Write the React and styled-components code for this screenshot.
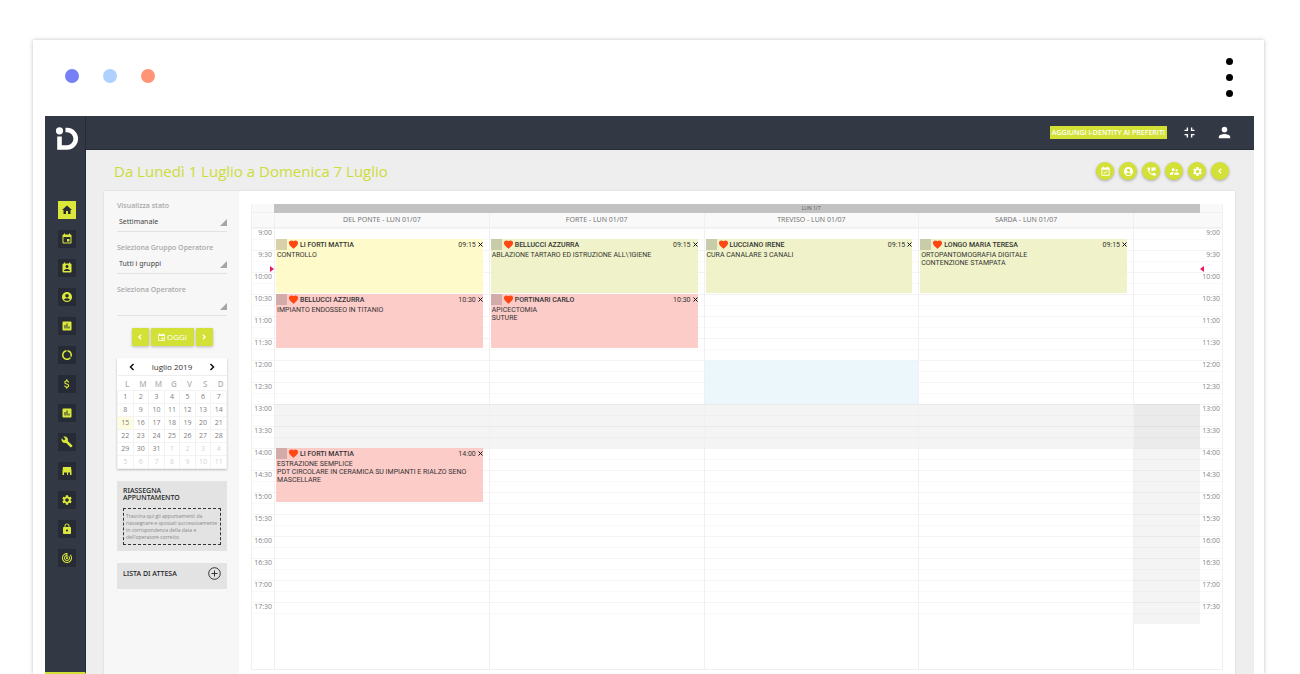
import styled, { createGlobalStyle } from 'styled-components'
import {
    MdAccountCircle, MdAttachMoney, MdBuild, MdDataUsage, MdEvent, MdEventAvailable, MdFavorite,
    MdFullscreenExit, MdHome, MdLock, MdPermContactCalendar, MdPermPhoneMsg, MdPerson, MdPoll,
    MdSettings, MdSupervisorAccount, MdTrackChanges
} from 'react-icons/md'

const Colours = {
    lime: '#d3e036',
    dark: '#323844',
    darker: '#262b35',
    page: '#eeeeee',
    line: '#f0f0f0',
    yellow: '#fff9c1d9',
    green: '#edf1bfd9',
    red: '#fbc3bfd9'
}

const GlobalStyle = createGlobalStyle`
    * {
        box-sizing: border-box;
    }

    body {
        margin: 0;
        background: white;
        font-family: 'Open Sans', 'Liberation Sans', sans-serif;
        color: #333;
    }

    button, select {
        font-family: inherit;
        border: 0;
        padding: 0;
        margin: 0;
        color: inherit;
        cursor: pointer;
    }
`

const Page = styled.div`
    display: flex;
    flex-direction: column;
    min-height: 100vh;
    padding: 40px 36px 0 33px;
`

const Browser = styled.div`
    flex: 1;
    display: flex;
    flex-direction: column;
    padding: 0 10px 0 12px;
    background: white;
    box-shadow: 0 0 4px rgba(0, 0, 0, 0.25);
    clip-path: inset(-6px -6px 0 -6px);
`

const Chrome = styled.div`
    display: flex;
    justify-content: space-between;
    align-items: flex-start;
    height: 76px;
    padding: 18px 21px 0 20px;
`

const Dots = styled.div`
    display: flex;
    gap: 24px;
    padding-top: 11px;
`

const Dot = styled.span`
    width: 14px;
    height: 14px;
    border-radius: 50%;
    background: ${props => props.$colour};
`

const Kebab = styled.button`
    display: flex;
    flex-direction: column;
    gap: 9px;
    background: none;

    & span {
        width: 7px;
        height: 7px;
        border-radius: 50%;
        background: black;
    }
`

const Application = styled.div`
    flex: 1;
    display: grid;
    grid-template-columns: 41px 1fr;
    grid-template-rows: 34px 1fr;
    background: ${Colours.page};
`

const Sidebar = styled.nav`
    grid-row: 1 / 3;
    display: flex;
    flex-direction: column;
    align-items: center;
    padding: 11px 0 0 3px;
    background: ${Colours.dark};
    border-right: 1px solid ${Colours.darker};
    border-bottom: 2px solid ${Colours.lime};
`

const Logo = styled.svg`
    width: 24px;
    height: 24px;
`

const Menu = styled.ul`
    list-style-type: none;
    display: flex;
    flex-direction: column;
    gap: 11px;
    margin: 50px 0 0;
    padding: 0;
`

const MenuLink = styled.a`
    display: flex;
    align-items: center;
    justify-content: center;
    width: 18px;
    height: 18px;
    font-size: 12px;
    color: ${props => props.$active ? Colours.darker : '#dbea3a'};
    background: ${props => props.$active ? '#d9e83a' : Colours.darker};
`

const TopBar = styled.header`
    display: flex;
    align-items: center;
    justify-content: flex-end;
    padding-right: 21px;
    background: ${Colours.dark};
    border-bottom: 1px solid ${Colours.darker};
`

const Favourite = styled.button`
    height: 13px;
    padding: 0 2px;
    margin-right: 14px;
    font-size: 7px;
    font-weight: 600;
    line-height: 13px;
    color: white;
    background: ${Colours.lime};
`

const BarButton = styled.button`
    display: flex;
    margin-left: ${props => props.$gap || 0}px;
    font-size: 17px;
    color: white;
    background: none;
`

const Main = styled.main`
    display: flex;
    flex-direction: column;
    padding: 11px 19px 0 18px;
`

const Heading = styled.div`
    display: flex;
    align-items: center;
    justify-content: space-between;
    height: 20px;
    margin-bottom: 10px;
    padding: 0 6px 0 10px;

    & h1 {
        margin: 0;
        font-size: 15px;
        line-height: 20px;
        font-weight: 500;
        color: #cddc39;
    }
`

const Actions = styled.div`
    display: flex;
    gap: 5px;
`

const RoundButton = styled.button`
    display: flex;
    align-items: center;
    justify-content: center;
    width: 18px;
    height: 18px;
    border-radius: 50%;
    font-size: 11px;
    color: white;
    background: ${Colours.lime};
    box-shadow: 0 1px 3px rgba(0, 0, 0, 0.3);
`

const Panel = styled.div`
    flex: 1;
    display: flex;
    background: white;
    box-shadow: 0 0 2px rgba(0, 0, 0, 0.12);
`

const Filters = styled.aside`
    width: 135px;
    flex-shrink: 0;
    padding: 9px 12px 0 13px;
    background: #f7f7f7;
`

const Field = styled.div`
    height: 32px;
    margin-bottom: 10px;
    border-bottom: 1px solid #e2e2e2;

    & label {
        display: block;
        font-size: 7px;
        font-weight: 600;
        line-height: 12px;
        color: #a9a9a9;
    }
`

const SelectBox = styled.div`
    display: flex;
    align-items: flex-end;

    & select {
        flex: 1;
        height: 18px;
        padding: 0 3px 0 2px;
        appearance: none;
        font-family: 'Noto Sans', sans-serif;
        font-size: 7px;
        color: #444;
        background: transparent;
    }

    &::after {
        content: '';
        border-left: 7px solid transparent;
        border-bottom: 7px solid #a5a5a5;
        margin-bottom: 4px;
    }
`

const Pager = styled.div`
    display: flex;
    justify-content: center;
    gap: 2px;
    margin: 12px 0;
`

const PagerButton = styled.button`
    display: flex;
    align-items: center;
    justify-content: center;
    gap: 1px;
    width: ${props => props.$wide ? 43 : 17}px;
    height: 18px;
    border-radius: 1px;
    font-size: 8px;
    line-height: 10px;
    font-weight: 500;
    color: white;
    background: ${Colours.lime};
    box-shadow: 0 1px 3px rgba(0, 0, 0, 0.25);
`

const Calendar = styled.div`
    margin-bottom: 12px;
    background: white;
    box-shadow: 0 1px 2px rgba(0, 0, 0, 0.25);
`

const CalendarHead = styled.div`
    display: flex;
    align-items: center;
    justify-content: space-between;
    height: 17px;
    padding: 0 11px;
    font-size: 8px;

    & button {
        display: flex;
        color: #111;
        background: none;
    }
`

const CalendarTable = styled.table`
    width: 100%;
    table-layout: fixed;
    border-collapse: collapse;
    text-align: center;

    & th {
        height: 14px;
        padding: 2px 0 0 4px;
        border-top: 1px solid #eee;
        font-size: 8px;
        font-weight: 600;
        line-height: 12px;
        color: #b5b5b5;
    }
`

const Day = styled.td`
    height: 13px;
    padding: 0;
    border: 1px solid #f3f3f3;
    font-size: 7px;
    line-height: 12px;
    color: ${props => props.$other ? '#d3d3d3' : '#808080'};
    background: ${props => props.$today ? '#fffde0' : 'white'};
`

const Card = styled.section`
    margin-bottom: 12px;
    padding: 6px;
    background: #e3e3e3;

    & h2 {
        margin: 0;
        font-family: 'Noto Sans', sans-serif;
        font-size: 7px;
        font-weight: 500;
        line-height: 7px;
        color: #222;
    }

    & p {
        margin: 7px 0 0;
        padding: 4px 2px 3px;
        border: 1px dashed #333;
        font-size: 5px;
        line-height: 7px;
        color: #888;
    }
`

const CardHead = styled.div`
    display: flex;
    justify-content: space-between;
    align-items: center;
    height: 14px;
    margin-top: -3px;
    margin-bottom: 3px;

    & button {
        display: flex;
        background: none;
    }
`

const Scheduler = styled.div`
    flex: 1;
    display: grid;
    grid-template-columns: 22px repeat(4, 1fr) 67px 22px;
    grid-template-rows: 9px 15px 1fr;
    margin: 13px 12px 4px;
    border: 1px solid ${Colours.line};
    border-top: 0;
`

const HeadCell = styled.div`
    background: #f9f9f9;
    border-left: 1px solid ${Colours.line};
    border-bottom: 1px solid ${Colours.line};
    font-family: 'Noto Sans', sans-serif;
    font-size: 7px;
    line-height: 14px;
    text-align: center;
    color: #777;
`

const WeekBar = styled.div`
    grid-column: 2 / 7;
    padding-left: 16%;
    font-size: 5px;
    line-height: 9px;
    text-align: center;
    color: #555;
    background: #c2c2c2;
`

const Corner = styled.div`
    background: #f9f9f9;
    border-bottom: 1px solid ${Colours.line};
`

const Hours = styled.ol`
    position: relative;
    list-style-type: none;
    margin: 0;
    padding: 0 0 45px;
    font-size: 7px;
    line-height: 10px;
    text-align: right;
    color: #858585;

    & li {
        height: 22px;
        padding-right: 2px;
        background: linear-gradient(#f3f3f3 1px, transparent 1px 11px, #f9f9f9 11px 12px, transparent 12px);
    }
`

const NowMark = styled.span`
    position: absolute;
    top: 38px;
    ${props => props.$side}: 0;
    border: 3px solid transparent;
    border-${props => props.$side === 'right' ? 'left' : 'right'}: 4px solid #ec1561;
    border-${props => props.$side}: 0;
`

/* one row for each quarter of an hour, from 9:00 to 18:00 */
const Column = styled.div`
    display: grid;
    grid-template-columns: 100%;
    grid-template-rows: repeat(36, 11px);
    border-left: 1px solid ${Colours.line};
    background: repeating-linear-gradient(#f3f3f3 0 1px, transparent 1px 11px, #f9f9f9 11px 12px, transparent 12px 22px) no-repeat;
    background-size: 100% 386px;
`

const Block = styled.div`
    grid-area: ${props => props.$from} / 1 / ${props => props.$to} / 2;
    background: ${props => props.$colour};
`

const Appointment = styled.article`
    grid-area: ${props => props.$from} / 1 / span 5 / 2;
    margin: 0 6px 1px 1px;
    background: ${props => props.$colour};
    font-family: Roboto, 'Liberation Sans', sans-serif;

    & header {
        display: flex;
        align-items: center;
        gap: 1px;
        height: 11px;
        font-size: 7px;
    }

    & h3 {
        flex: 1;
        margin: 0;
        font-size: 7px;
        font-weight: 500;
    }

    & button {
        display: flex;
        margin-left: 1px;
        color: #111;
        background: none;
    }

    & p {
        margin: 1px 0 0;
        padding-left: 1px;
        font-size: 7px;
        line-height: 8px;
        white-space: pre-line;
    }
`

const Tag = styled.span`
    width: 11px;
    height: 11px;
    background: rgba(0, 0, 0, 0.16);
`

function StoreIcon() {
    return (
        <svg width="12" height="12" viewBox="0 0 24 24" fill="currentColor">
            <path d="M4 4h16l1 8v8h-3v-5h-4v5h-2v-5H6v5H3v-8z" />
        </svg>
    )
}

function ChevronLeft({ size = 6 }) {
    return (
        <svg width={size} height={size} viewBox="0 0 8 8" fill="none" stroke="currentColor" strokeWidth="1.5">
            <path d="M5.5 1 2.5 4l3 3" />
        </svg>
    )
}

function ChevronRight({ size = 6 }) {
    return (
        <svg width={size} height={size} viewBox="0 0 8 8" fill="none" stroke="currentColor" strokeWidth="1.5">
            <path d="m2.5 1 3 3-3 3" />
        </svg>
    )
}

function Cross() {
    return (
        <svg width="5" height="5" viewBox="0 0 5 5" fill="none" stroke="currentColor">
            <path d="m.5.5 4 4m0-4-4 4" />
        </svg>
    )
}

const menu = [
    ['Home', MdHome], ['Agenda', MdEvent], ['Contatti', MdPermContactCalendar], ['Pazienti', MdAccountCircle],
    ['Statistiche', MdPoll], ['Utilizzo', MdDataUsage], ['Pagamenti', MdAttachMoney], ['Report', MdPoll],
    ['Strumenti', MdBuild], ['Magazzino', StoreIcon], ['Impostazioni', MdSettings], ['Sicurezza', MdLock],
    ['Monitoraggio', MdTrackChanges]
]

const actions = [
    ['Nuovo appuntamento', MdEventAvailable], ['Paziente', MdAccountCircle], ['Chiamate', MdPermPhoneMsg],
    ['Operatori', MdSupervisorAccount], ['Impostazioni', MdSettings], ['Indietro', ChevronLeft]
]

const hours = Array.from({ length: 18 }, (_, i) => `${9 + Math.floor(i / 2)}:${i % 2 ? '30' : '00'}`)

const weeks = Array.from({ length: 6 }, (_, w) => Array.from({ length: 7 }, (_, d) => w * 7 + d + 1))

const columns = [
    {
        name: 'DEL PONTE - LUN 01/07',
        items: [
            { from: 2, time: '09:15', name: 'LI FORTI MATTIA', text: 'CONTROLLO', colour: Colours.yellow },
            { from: 7, time: '10:30', name: 'BELLUCCI AZZURRA', text: 'IMPIANTO ENDOSSEO IN TITANIO', colour: Colours.red },
            { from: 21, time: '14:00', name: 'LI FORTI MATTIA', text: 'ESTRAZIONE SEMPLICE\nPDT CIRCOLARE IN CERAMICA SU IMPIANTI E RIALZO SENO MASCELLARE', colour: Colours.red }
        ]
    },
    {
        name: 'FORTE - LUN 01/07',
        items: [
            { from: 2, time: '09:15', name: 'BELLUCCI AZZURRA', text: "ABLAZIONE TARTARO ED ISTRUZIONE ALL\\'IGIENE", colour: Colours.green },
            { from: 7, time: '10:30', name: 'PORTINARI CARLO', text: 'APICECTOMIA\nSUTURE', colour: Colours.red }
        ]
    },
    {
        name: 'TREVISO - LUN 01/07',
        free: true,
        items: [
            { from: 2, time: '09:15', name: 'LUCCIANO IRENE', text: 'CURA CANALARE 3 CANALI', colour: Colours.green }
        ]
    },
    {
        name: 'SARDA - LUN 01/07',
        items: [
            { from: 2, time: '09:15', name: 'LONGO MARIA TERESA', text: 'ORTOPANTOMOGRAFIA DIGITALE\nCONTENZIONE STAMPATA', colour: Colours.green }
        ]
    }
]

function HourList({ side }) {
    return (
        <Hours>
            {hours.map(hour => <li key={hour}>{hour}</li>)}
            <NowMark $side={side} />
        </Hours>
    )
}

/**
 * FilterPanel
 *
 * Renders the filters, the month calendar and the cards beside the agenda
 */

function FilterPanel() {
    return (
        <Filters>
            <Field>
                <label htmlFor="stato">Visualizza stato</label>
                <SelectBox><select id="stato"><option>Settimanale</option></select></SelectBox>
            </Field>
            <Field>
                <label htmlFor="gruppo">Seleziona Gruppo Operatore</label>
                <SelectBox><select id="gruppo"><option>Tutti i gruppi</option></select></SelectBox>
            </Field>
            <Field>
                <label htmlFor="operatore">Seleziona Operatore</label>
                <SelectBox><select id="operatore"><option></option></select></SelectBox>
            </Field>

            <Pager>
                <PagerButton aria-label="Settimana precedente"><ChevronLeft /></PagerButton>
                <PagerButton $wide><MdEvent size={9} />OGGI</PagerButton>
                <PagerButton aria-label="Settimana successiva"><ChevronRight /></PagerButton>
            </Pager>

            <Calendar>
                <CalendarHead>
                    <button aria-label="Mese precedente"><ChevronLeft size={8} /></button>
                    luglio 2019
                    <button aria-label="Mese successivo"><ChevronRight size={8} /></button>
                </CalendarHead>
                <CalendarTable>
                    <thead>
                        <tr>{['L', 'M', 'M', 'G', 'V', 'S', 'D'].map((day, i) => <th key={i}>{day}</th>)}</tr>
                    </thead>
                    <tbody>
                        {weeks.map(week => (
                            <tr key={week[0]}>
                                {week.map(day => (
                                    <Day key={day} $other={day > 31} $today={day === 15}>{day > 31 ? day - 31 : day}</Day>
                                ))}
                            </tr>
                        ))}
                    </tbody>
                </CalendarTable>
            </Calendar>

            <Card>
                <h2>RIASSEGNA<br />APPUNTAMENTO</h2>
                <p>Trascina qui gli appuntamenti da riassegnare e spostali successivamente in corrispondenza della data e dell'operatore corretto</p>
            </Card>

            <Card>
                <CardHead>
                    <h2>LISTA DI ATTESA</h2>
                    <button aria-label="Aggiungi">
                        <svg width="13" height="13" viewBox="0 0 13 13" fill="none" stroke="#333">
                            <circle cx="6.5" cy="6.5" r="5.8" />
                            <path d="M6.5 3.5v6M3.5 6.5h6" />
                        </svg>
                    </button>
                </CardHead>
            </Card>
        </Filters>
    )
}

/**
 * Agenda
 *
 * Renders the week view, with one column for each operator
 */

function Agenda() {
    return (
        <Scheduler>
            <Corner />
            <WeekBar>LUN 1/7</WeekBar>
            <Corner />

            <Corner />
            {columns.map(column => <HeadCell key={column.name}>{column.name}</HeadCell>)}
            <HeadCell />
            <Corner />

            <HourList side="right" />
            {columns.map(column => (
                <Column key={column.name}>
                    {column.free && <Block $from={13} $to={17} $colour="#e9f6f9e6" />}
                    <Block $from={17} $to={21} $colour="rgba(0, 0, 0, 0.045)" />
                    {column.items.map(item => (
                        <Appointment key={item.time} $from={item.from} $colour={item.colour}>
                            <header>
                                <Tag />
                                <MdFavorite size={11} color="#ff4713" />
                                <h3>{item.name}</h3>
                                <time>{item.time}</time>
                                <button aria-label="Elimina"><Cross /></button>
                            </header>
                            <p>{item.text}</p>
                        </Appointment>
                    ))}
                </Column>
            ))}
            <Column>
                <Block $from={17} $to={21} $colour="rgba(0, 0, 0, 0.035)" />
                <Block $from={17} $to={37} $colour="rgba(0, 0, 0, 0.045)" />
            </Column>
            <HourList side="left" />
        </Scheduler>
    )
}

function App() {
    return (
        <Page>
            <GlobalStyle />
            <Browser>
                <Chrome>
                    <Dots>
                        <Dot $colour="#7680f5" />
                        <Dot $colour="#b0d0ff" />
                        <Dot $colour="#ff9576" />
                    </Dots>
                    <Kebab aria-label="Menu"><span /><span /><span /></Kebab>
                </Chrome>

                <Application>
                    <Sidebar>
                        <Logo viewBox="0 0 24 24" fill="none" stroke="white">
                            <circle cx="4.5" cy="3.8" r="3.6" fill="white" stroke="none" />
                            <path d="M10.5 3H12a8.7 8.7 0 0 1 0 17.5H4.5V9.5" strokeWidth="4.6" />
                        </Logo>
                        <Menu>
                            {menu.map(([label, Icon], i) => (
                                <li key={label}><MenuLink href="#" aria-label={label} $active={i === 0}><Icon /></MenuLink></li>
                            ))}
                        </Menu>
                    </Sidebar>

                    <TopBar>
                        <Favourite>AGGIUNGI I-DENTITY AI PREFERITI</Favourite>
                        <BarButton aria-label="Esci da schermo intero"><MdFullscreenExit /></BarButton>
                        <BarButton aria-label="Profilo" $gap={18}><MdPerson /></BarButton>
                    </TopBar>

                    <Main>
                        <Heading>
                            <h1>Da Lunedì 1 Luglio a Domenica 7 Luglio</h1>
                            <Actions>
                                {actions.map(([label, Icon]) => <RoundButton key={label} aria-label={label}><Icon /></RoundButton>)}
                            </Actions>
                        </Heading>
                        <Panel>
                            <FilterPanel />
                            <Agenda />
                        </Panel>
                    </Main>
                </Application>
            </Browser>
        </Page>
    )
}

export default App
